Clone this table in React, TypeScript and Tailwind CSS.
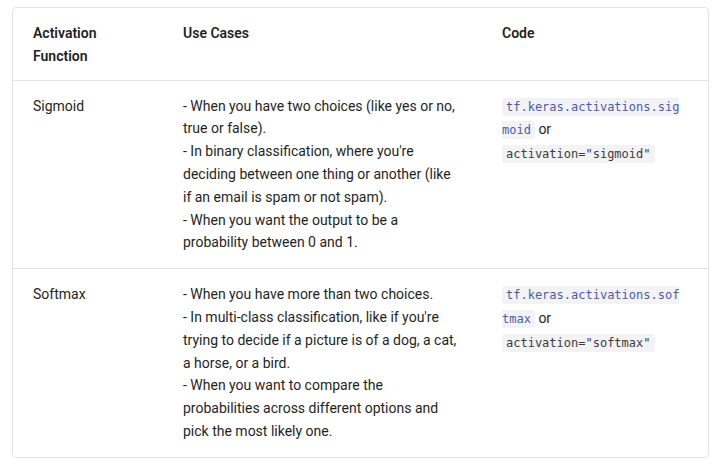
import React from 'react';

// visual lines of the use-case column, as wrapped in the design
const rows = [
  {
    name: 'Sigmoid',
    uses: [
      '- When you have two choices (like yes or no,',
      'true or false).',
      "- In binary classification, where you're",
      'deciding between one thing or another (like',
      'if an email is spam or not spam).',
      '- When you want the output to be a',
      'probability between 0 and 1.',
    ],
    fn: 'tf.keras.activations.sigmoid',
    arg: 'activation="sigmoid"',
  },
  {
    name: 'Softmax',
    uses: [
      '- When you have more than two choices.',
      "- In multi-class classification, like if you're",
      'trying to decide if a picture is of a dog, a cat,',
      'a horse, or a bird.',
      '- When you want to compare the',
      'probabilities across different options and',
      'pick the most likely one.',
    ],
    fn: 'tf.keras.activations.softmax',
    arg: 'activation="softmax"',
  },
];

function Code({ children, blue }: { children: React.ReactNode; blue?: boolean }) {
  return (
    <code
      className={
        'rounded-[3px] bg-[#f3f3f5] px-[4px] py-[2px] font-["DejaVu_Sans_Mono",monospace] text-[12px] [overflow-wrap:anywhere] ' +
        (blue ? 'text-[#4a5bb0]' : 'text-[#3c3c3c]')
      }
    >
      {children}
    </code>
  );
}

export default function App() {
  return (
    <div className="min-h-[466px] bg-white px-[12px] pt-[7px] font-['Roboto',sans-serif] text-[14px] leading-[22.8px] text-[#1f1f1f]">
      <table className="w-[697px] table-fixed border-separate border-spacing-0 rounded-[4px] border border-[#e3e3e3]">
        <colgroup>
          <col className="w-[150px]" />
          <col className="w-[319px]" />
          <col />
        </colgroup>
        <thead>
          <tr className="text-left">
            <th className="border-b border-[#e3e3e3] px-[20px] pt-[14px] pb-[12px] align-top font-semibold">Activation Function</th>
            <th className="border-b border-[#e3e3e3] px-[20px] pt-[14px] pb-[12px] align-top font-semibold">Use Cases</th>
            <th className="border-b border-[#e3e3e3] px-[20px] pt-[14px] pb-[12px] align-top font-semibold">Code</th>
          </tr>
        </thead>
        <tbody>
          {rows.map((r, i) => {
            const b = i < rows.length - 1 ? 'border-b border-[#e3e3e3]' : '';
            return (
              <tr key={r.name}>
                <td className={`${b} px-[20px] py-[14px] align-top`}>{r.name}</td>
                <td className={`${b} pl-[20px] pr-[8px] py-[14px] align-top`}>
                  {r.uses.map(u => (
                    <div key={u} className="whitespace-nowrap">{u}</div>
                  ))}
                </td>
                <td className={`${b} pl-[20px] pr-[22px] py-[14px] align-top`}>
                  <Code blue>{r.fn}</Code> or <Code>{r.arg}</Code>
                </td>
              </tr>
            );
          })}
        </tbody>
      </table>
    </div>
  );
}
